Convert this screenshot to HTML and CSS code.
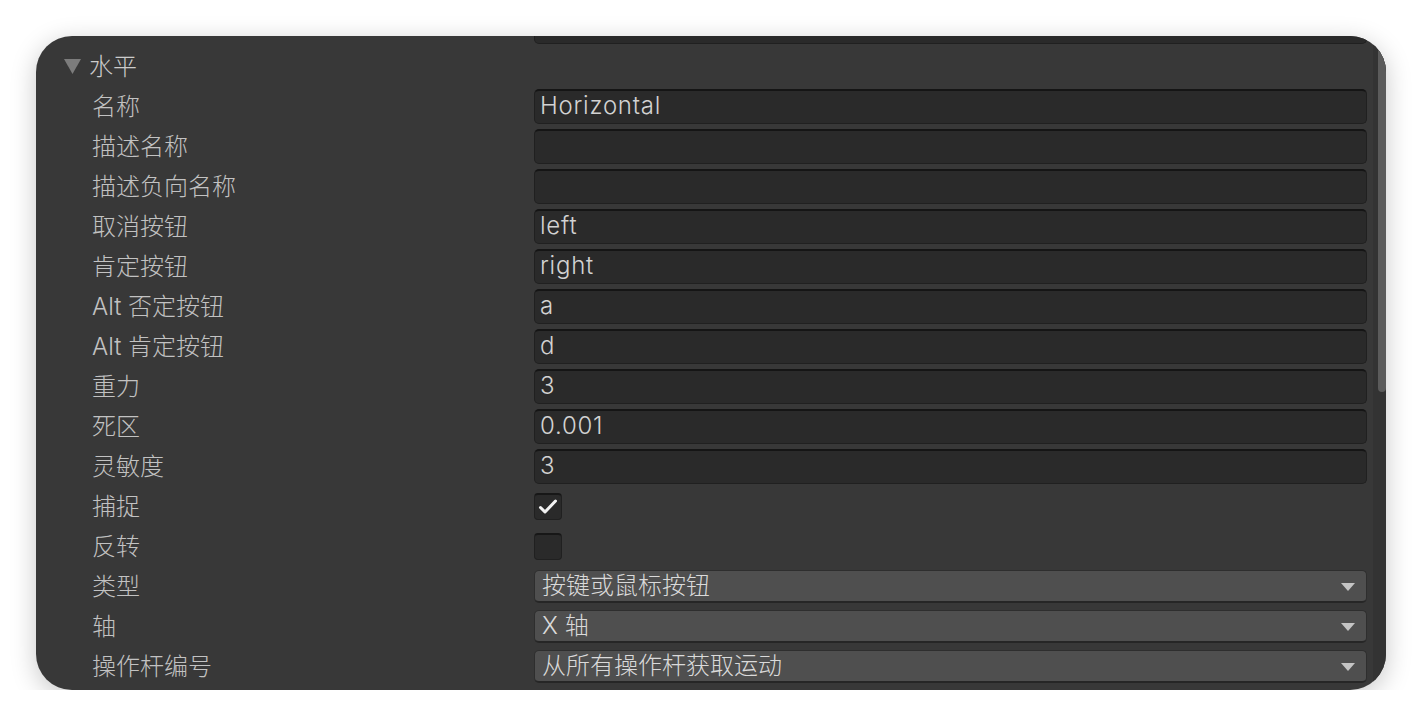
FILE: index.html
```html
<!DOCTYPE html>
<html lang="zh-CN">
<head>
    <meta charset="UTF-8">
    <title>Input Axis - 水平</title>
    <link rel="stylesheet" href="styles.css">
</head>
<body>
    <div class="window">
        <div class="content">
            <div class="row cut">
                <span class="label"></span>
                <div class="field"></div>
            </div>
            <div class="row group">
                <svg class="fold" width="17" height="15" viewBox="0 0 17 15"><polygon points="0,0 17,0 8.5,15" fill="#7c7c7c"/></svg>
                <span class="group-name">水平</span>
            </div>
            <div class="row">
                <span class="label">名称</span>
                <div class="field">Horizontal</div>
            </div>
            <div class="row">
                <span class="label">描述名称</span>
                <div class="field"></div>
            </div>
            <div class="row">
                <span class="label">描述负向名称</span>
                <div class="field"></div>
            </div>
            <div class="row">
                <span class="label">取消按钮</span>
                <div class="field">left</div>
            </div>
            <div class="row">
                <span class="label">肯定按钮</span>
                <div class="field">right</div>
            </div>
            <div class="row">
                <span class="label">Alt 否定按钮</span>
                <div class="field">a</div>
            </div>
            <div class="row">
                <span class="label">Alt 肯定按钮</span>
                <div class="field">d</div>
            </div>
            <div class="row">
                <span class="label">重力</span>
                <div class="field">3</div>
            </div>
            <div class="row">
                <span class="label">死区</span>
                <div class="field">0.001</div>
            </div>
            <div class="row">
                <span class="label">灵敏度</span>
                <div class="field">3</div>
            </div>
            <div class="row">
                <span class="label">捕捉</span>
                <div class="check">
                    <svg width="28" height="27" viewBox="0 0 28 27"><polyline points="6.5,14.5 11,19 21.5,8" fill="none" stroke="#f2f2f2" stroke-width="3" stroke-linecap="round" stroke-linejoin="round"/></svg>
                </div>
            </div>
            <div class="row">
                <span class="label">反转</span>
                <div class="check"></div>
            </div>
            <div class="row">
                <span class="label">类型</span>
                <div class="select">按键或鼠标按钮<span class="arrow"></span></div>
            </div>
            <div class="row">
                <span class="label">轴</span>
                <div class="select">X 轴<span class="arrow"></span></div>
            </div>
            <div class="row">
                <span class="label">操作杆编号</span>
                <div class="select">从所有操作杆获取运动<span class="arrow"></span></div>
            </div>
        </div>
        <div class="scrollbar">
            <div class="thumb"></div>
        </div>
    </div>
</body>
</html>
```

FILE: styles.css
```css
body { margin: 0; background: #ffffff; font-family: "Inter", "Noto Sans CJK SC", sans-serif; font-weight: 300; }
.window { margin: 36px 0 0 36px; width: 1350px; height: 654px; background: #383838; border-radius: 36px; overflow: hidden; display: flex; box-shadow: 0 6px 26px rgba(0, 0, 0, 0.22); }
.content { flex: 1; margin-top: -30px; padding-right: 6px; }
.row { height: 40px; display: flex; align-items: center; }
.label { width: 442px; padding-left: 56px; padding-bottom: 4px; flex: none; font-size: 24px; color: #c2c2c2; white-space: nowrap; }
.group { padding-left: 28px; }
.fold { margin-right: 8px; margin-top: 1px; }
.group-name { font-size: 24px; color: #cccccc; padding-bottom: 4px; }
.field { flex: 1; height: 35px; box-sizing: border-box; background: #2a2a2a; border: 1px solid #202020; border-top: 2px solid #151515; border-radius: 5px; padding-left: 5px; font-size: 24px; line-height: 30px; letter-spacing: 0.75px; color: #d2d2d2; }
.check { width: 28px; height: 27px; box-sizing: border-box; background: #2a2a2a; border: 1px solid #202020; border-top: 2px solid #171717; border-radius: 4px; }
.check svg { display: block; margin: -2px 0 0 -1px; }
.select { flex: 1; height: 33px; box-sizing: border-box; background: #4f4f4f; border: 1px solid #2e2e2e; border-bottom: 2px solid #262626; border-radius: 5px; padding-left: 7px; font-size: 24px; line-height: 30px; color: #dadada; display: flex; align-items: center; justify-content: space-between; padding-right: 11px; }
.arrow { width: 0; height: 0; border-left: 7px solid transparent; border-right: 7px solid transparent; border-top: 8px solid #c4c4c4; margin-top: 2px; }
.scrollbar { width: 13px; background: #333333; flex: none; }
.thumb { margin-left: 5px; height: 356px; background: #5b5b5b; border-radius: 0 0 4px 4px; }
```
